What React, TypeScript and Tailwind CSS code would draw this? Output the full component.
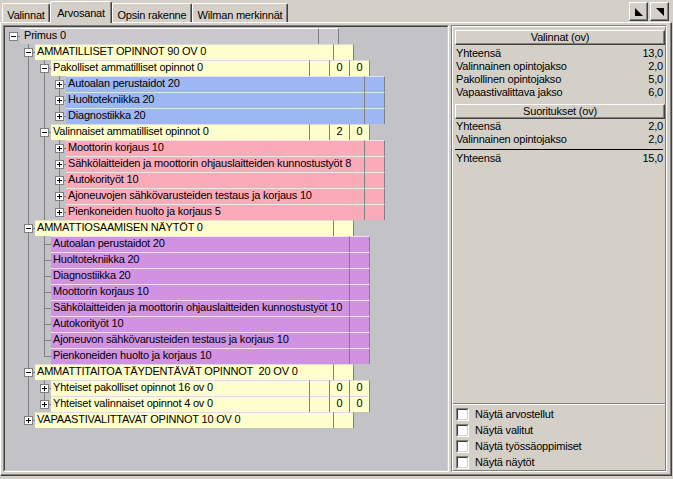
import React from 'react';

const C = [8, 23, 39, 54];
const G = [15, 30, 46, 61];

type VLine = [number, boolean];
type Tone = 'grey' | 'yellow' | 'blue' | 'pink' | 'purple';
type Row = {
  level: number;
  label: string;
  tone: Tone;
  box?: '+' | '-';
  leaf?: boolean;
  vals?: [string, string];
  v: VLine[];
};

const toneClass: Record<Tone, string> = {
  grey: 'bg-[#cbc9ce] border-t-white',
  yellow: 'bg-[#ffffcc] border-t-[#dcdcdc]',
  blue: 'bg-[#9db7f4] border-t-[#e4e4f0]',
  pink: 'bg-[#fbaab9] border-t-[#f0e4e8]',
  purple: 'bg-[#d292e2] border-t-[#ece4f0]',
};

const blue = ['Autoalan perustaidot 20', 'Huoltotekniikka 20', 'Diagnostiikka 20'];
const pink = [
  'Moottorin korjaus 10',
  'Sähkölaitteiden ja moottorin ohjauslaitteiden kunnostustyöt 8',
  'Autokorityöt 10',
  'Ajoneuvojen sähkövarusteiden testaus ja korjaus 10',
  'Pienkoneiden huolto ja korjaus 5',
];
const purple = [
  'Autoalan perustaidot 20',
  'Huoltotekniikka 20',
  'Diagnostiikka 20',
  'Moottorin korjaus 10',
  'Sähkölaitteiden ja moottorin ohjauslaitteiden kunnostustyöt 10',
  'Autokorityöt 10',
  'Ajoneuvon sähkövarusteiden testaus ja korjaus 10',
  'Pienkoneiden huolto ja korjaus 10',
];

const rows: Row[] = [
  { level: 0, label: 'Primus 0', tone: 'grey', box: '-', v: [] },
  { level: 1, label: 'AMMATILLISET OPINNOT 90 OV 0', tone: 'yellow', box: '-', v: [[23, true]] },
  { level: 2, label: 'Pakolliset ammatilliset opinnot 0', tone: 'yellow', box: '-', vals: ['0', '0'], v: [[23, true], [39, true]] },
  ...blue.map((l, i): Row => ({ level: 3, label: l, tone: 'blue', box: '+', v: [[23, true], [39, true], [54, i < blue.length - 1]] })),
  { level: 2, label: 'Valinnaiset ammatilliset opinnot 0', tone: 'yellow', box: '-', vals: ['2', '0'], v: [[23, true], [39, true]] },
  ...pink.map((l, i): Row => ({ level: 3, label: l, tone: 'pink', box: '+', v: [[23, true], [39, true], [54, i < pink.length - 1]] })),
  { level: 1, label: 'AMMATTIOSAAMISEN NÄYTÖT 0', tone: 'yellow', box: '-', v: [[23, true]] },
  ...purple.map((l, i): Row => ({ level: 2, label: l, tone: 'purple', leaf: true, v: [[23, true], [39, i < purple.length - 1]] })),
  { level: 1, label: 'AMMATTITAITOA TÄYDENTÄVÄT OPINNOT  20 OV 0', tone: 'yellow', box: '-', v: [[23, true]] },
  { level: 2, label: 'Yhteiset pakolliset opinnot 16 ov 0', tone: 'yellow', box: '+', vals: ['0', '0'], v: [[23, true], [39, true]] },
  { level: 2, label: 'Yhteiset valinnaiset opinnot 4 ov 0', tone: 'yellow', box: '+', vals: ['0', '0'], v: [[23, true], [39, false]] },
  { level: 1, label: 'VAPAASTIVALITTAVAT OPINNOT 10 OV 0', tone: 'yellow', box: '+', v: [[23, false]] },
];

function Gutter({ row }: { row: Row }) {
  const w = G[row.level];
  const c = C[row.level];
  return (
    <svg width={w} height={16} className="shrink-0 block">
      {row.v.map(([x, full], i) => (
        <rect key={i} x={x} y={0} width={1} height={full ? 16 : 9} fill="#808080" />
      ))}
      {row.leaf && <rect x={39} y={8} width={w - 39} height={1} fill="#808080" />}
      {row.box && (
        <>
          <rect x={c + 5} y={8} width={w - (c + 5)} height={1} fill="#808080" />
          <rect x={c - 3.5} y={4.5} width={8} height={8} fill="#ffffff" stroke="#808080" strokeWidth={1} />
          <rect x={c - 2} y={8} width={5} height={1} fill="#000000" />
          {row.box === '+' && <rect x={c} y={6} width={1} height={5} fill="#000000" />}
        </>
      )}
    </svg>
  );
}

function Cell({ w, tone, children, center }: { w: string; tone: Tone; children?: React.ReactNode; center?: boolean }) {
  return (
    <div
      className={`${w} ${toneClass[tone]} h-[16px] shrink-0 border-t border-r border-r-[#808080] leading-[13px] whitespace-pre overflow-hidden ${center ? 'text-center' : 'pl-[2px]'}`}
    >
      {children}
    </div>
  );
}

function TreeRow({ row }: { row: Row }) {
  return (
    <div className="flex h-[16px]">
      <Gutter row={row} />
      {row.vals ? (
        <>
          <Cell w="w-[259px]" tone={row.tone}>{row.label}</Cell>
          <Cell w="w-[20px]" tone={row.tone} />
          <Cell w="w-[20px]" tone={row.tone} center>{row.vals[0]}</Cell>
          <Cell w="w-[20px]" tone={row.tone} center>{row.vals[1]}</Cell>
        </>
      ) : (
        <>
          <Cell w="w-[299px]" tone={row.tone}>
            <span className={row.level === 0 ? 'pl-[2px]' : ''}>{row.label}</span>
          </Cell>
          <Cell w="w-[20px]" tone={row.tone} />
        </>
      )}
    </div>
  );
}

function Tab({ label, w, selected }: { label: string; w: string; selected?: boolean }) {
  if (selected) {
    return (
      <div
        className={`${w} relative z-10 mt-[1px] h-[22px] bg-[#d4d0c8] border-l border-t border-r border-l-white border-t-white border-r-[#404040] rounded-t-[2px] shadow-[inset_-1px_0_0_#808080] pt-[5px] text-center whitespace-nowrap`}
      >
        {label}
      </div>
    );
  }
  return (
    <div
      className={`${w} mt-[3px] h-[19px] border-l border-t border-r border-l-white border-t-white border-r-[#404040] rounded-t-[2px] shadow-[inset_-1px_0_0_#808080] pt-[5px] text-center whitespace-nowrap`}
    >
      {label}
    </div>
  );
}

function TriButton({ dir }: { dir: 'dl' | 'ur' }) {
  return (
    <div className="w-[19px] h-[19px] border border-t-white border-l-white border-r-[#404040] border-b-[#404040] shadow-[inset_-1px_-1px_0_#808080] flex items-center justify-center">
      <svg width={8} height={8} className="block">
        {dir === 'dl' ? <polygon points="0,0 0,8 8,8" fill="#000" /> : <polygon points="0,0 8,0 8,8" fill="#000" />}
      </svg>
    </div>
  );
}

function Header({ label }: { label: string }) {
  return (
    <div className="ml-[2px] h-[15px] border border-t-white border-l-white border-r-[#404040] border-b-[#404040] shadow-[inset_-1px_-1px_0_#808080] text-center leading-[13px]">
      {label}
    </div>
  );
}

function ValRow({ label, value }: { label: string; value: string }) {
  return (
    <div className="flex justify-between h-[13px] pl-[3px] pr-[2px] leading-[13px] whitespace-nowrap">
      <span>{label}</span>
      <span>{value}</span>
    </div>
  );
}

function Check({ label }: { label: string }) {
  return (
    <div className="flex items-center h-[16px] pl-[3px] gap-[6px]">
      <span className="w-[13px] h-[13px] border border-t-[#808080] border-l-[#808080] border-r-white border-b-white">
        <span className="block w-full h-full bg-white border border-t-[#404040] border-l-[#404040] border-r-[#d4d0c8] border-b-[#d4d0c8]" />
      </span>
      <span className="leading-[13px]">{label}</span>
    </div>
  );
}

export default function App() {
  return (
    <div className="w-[673px] h-[479px] bg-[#d4d0c8] overflow-hidden font-['Liberation_Sans',Arial,sans-serif] text-[11px] tracking-[-0.2px] text-black leading-[13px]">
      <div className="flex h-[22px] items-start justify-between pl-[2px] pr-[4px]">
        <div className="flex items-start">
          <Tab label="Valinnat" w="w-[48px]" />
          <Tab label="Arvosanat" w="w-[62px]" selected />
          <Tab label="Opsin rakenne" w="w-[80px]" />
          <Tab label="Wilman merkinnät" w="w-[96px]" />
        </div>
        <div className="flex gap-[2px] mt-[2px]">
          <TriButton dir="dl" />
          <TriButton dir="ur" />
        </div>
      </div>

      <div className="w-[672px] h-[454px] flex gap-[2px] border-t border-l border-r border-b border-t-white border-l-white border-r-[#404040] border-b-[#404040] shadow-[inset_-1px_-1px_0_#808080] pt-[2px] pb-[3px] pl-[2px] pr-[4px]">
        <div className="w-[446px] shrink-0 border border-t-[#808080] border-l-[#808080] border-r-white border-b-white">
          <div className="h-full border border-t-[#404040] border-l-[#404040] border-r-[#d4d0c8] border-b-[#d4d0c8] bg-[#c3c2c7] pt-[1px] overflow-hidden">
            {rows.map((r, i) => (
              <TreeRow key={i} row={r} />
            ))}
          </div>
        </div>

        <div className="w-[216px] shrink-0 border border-t-[#808080] border-l-[#808080] border-r-white border-b-white">
          <div className="h-full flex flex-col border border-t-white border-l-white border-r-[#808080] border-b-[#808080] pt-[3px] overflow-hidden">
            <Header label="Valinnat (ov)" />
            <div className="mt-[2px]">
              <ValRow label="Yhteensä" value="13,0" />
              <ValRow label="Valinnainen opintojakso" value="2,0" />
              <ValRow label="Pakollinen opintojakso" value="5,0" />
              <ValRow label="Vapaastivalittava jakso" value="6,0" />
            </div>
            <div className="mt-[5px]">
              <Header label="Suoritukset (ov)" />
            </div>
            <div className="mt-[1px]">
              <ValRow label="Yhteensä" value="2,0" />
              <ValRow label="Valinnainen opintojakso" value="2,0" />
            </div>
            <div className="mt-[3px] mx-[2px] h-[1px] bg-black" />
            <div className="mt-[2px]">
              <ValRow label="Yhteensä" value="15,0" />
            </div>
            <div className="flex-1" />
            <div className="h-[2px] border-t border-t-[#808080] border-b border-b-white" />
            <div className="pt-[1px]">
              <Check label="Näytä arvostellut" />
              <Check label="Näytä valitut" />
              <Check label="Näytä työssäoppimiset" />
              <Check label="Näytä näytöt" />
            </div>
          </div>
        </div>
      </div>
    </div>
  );
}
